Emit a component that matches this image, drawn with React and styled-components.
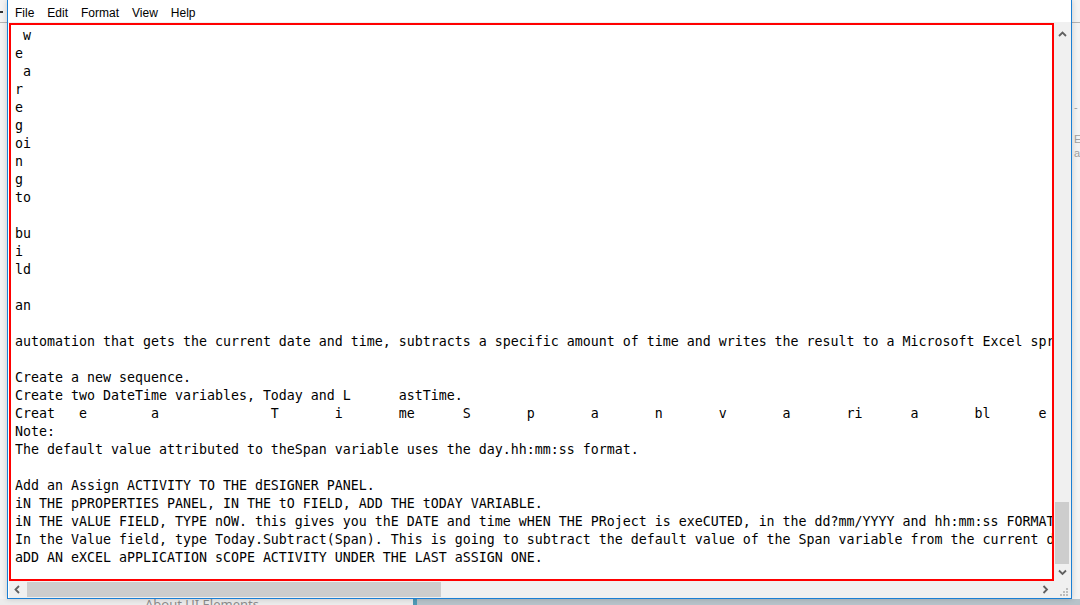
import React from 'react';
import styled, { createGlobalStyle } from 'styled-components';

const GlobalStyle = createGlobalStyle`
  html, body {
    margin: 0;
    padding: 0;
    background: #f0f0f0;
    overflow: hidden;
  }
  #root {
    width: 1080px;
    height: 605px;
  }
`;

// puts each word at a given column, padding with spaces like the stray tabs in the file
const atCols = (pairs) =>
  pairs.reduce((line, [col, word]) => line + ' '.repeat(Math.max(0, col - line.length)) + word, '');

const lines = [
  ' w',
  'e',
  ' a',
  'r',
  'e',
  'g',
  'oi',
  'n',
  'g',
  'to',
  '',
  'bu',
  'i',
  'ld',
  '',
  'an',
  '',
  'automation that gets the current date and time, subtracts a specific amount of time and writes the result to a Microsoft Excel spreadsheet.',
  '',
  'Create a new sequence.',
  'Create two DateTime variables, Today and L      astTime.',
  atCols([
    [0, 'Creat'], [8, 'e'], [17, 'a'], [32, 'T'], [40, 'i'], [48, 'me'], [56, 'S'], [64, 'p'],
    [72, 'a'], [80, 'n'], [88, 'v'], [96, 'a'], [104, 'ri'], [112, 'a'], [120, 'bl'], [128, 'e'],
  ]),
  'Note:',
  'The default value attributed to theSpan variable uses the day.hh:mm:ss format.',
  '',
  'Add an Assign ACTIVITY TO THE dESIGNER PANEL.',
  'iN THE pPROPERTIES PANEL, IN THE tO FIELD, ADD THE tODAY VARIABLE.',
  'iN THE vALUE FIELD, TYPE nOW. this gives you thE DATE and time wHEN THE PRoject is exeCUTED, in the dd?mm/YYYY and hh:mm:ss FORMAT.',
  'In the Value field, type Today.Subtract(Span). This is going to subtract the default value of the Span variable from the current date.',
  'aDD AN eXCEL aPPLICATION sCOPE ACTIVITY UNDER THE LAST aSSIGN ONE.',
];

const menus = ['File', 'Edit', 'Format', 'View', 'Help'];

function Chevron({ dir }) {
  const paths = {
    up: 'M1 5 L4.5 1.5 L8 5',
    down: 'M1 1.5 L4.5 5 L8 1.5',
    left: 'M5 1 L1.5 4.5 L5 8',
    right: 'M1.5 1 L5 4.5 L1.5 8',
  };
  const vertical = dir === 'up' || dir === 'down';
  return (
    <svg width={vertical ? 9 : 7} height={vertical ? 7 : 9} viewBox={vertical ? '0 0 9 7' : '0 0 7 9'}>
      <path d={paths[dir]} fill="none" stroke="#606060" strokeWidth="1.8" />
    </svg>
  );
}

function Grip() {
  const dots = [[6, 0], [3, 3], [6, 3], [0, 6], [3, 6], [6, 6]];
  return (
    <svg width="8" height="8" viewBox="0 0 8 8">
      {dots.map(([x, y]) => (
        <rect key={`${x}-${y}`} x={x} y={y} width="2" height="2" fill="#bcbcbc" />
      ))}
    </svg>
  );
}

export default function App() {
  return (
    <Desktop>
      <GlobalStyle />
      <Top>
        <LeftStrip>
          <Dash />
          <StripLine />
        </LeftStrip>
        <Window>
          <MenuBar>
            {menus.map((m) => (
              <MenuItem key={m}>{m}</MenuItem>
            ))}
          </MenuBar>
          <Editor>
            <TextPane>
              <TextBody>{lines.join('\n')}</TextBody>
            </TextPane>
            <VScroll>
              <ArrowButton $top>
                <Chevron dir="up" />
              </ArrowButton>
              <VTrack>
                <VThumb />
              </VTrack>
              <ArrowButton>
                <Chevron dir="down" />
              </ArrowButton>
            </VScroll>
            <HScroll>
              <ArrowButton>
                <Chevron dir="left" />
              </ArrowButton>
              <HThumb />
              <HTrack />
              <ArrowButton>
                <Chevron dir="right" />
              </ArrowButton>
            </HScroll>
            <Corner>
              <Grip />
            </Corner>
          </Editor>
        </Window>
        <RightStrip>
          <StripLine />
          <Ghost $mt={78}>-</Ghost>
          <Ghost $mt={20}>E</Ghost>
          <Ghost $mt={2}>a</Ghost>
        </RightStrip>
      </Top>
      <BottomStrip>
        <LowerPanel>
          <LowerLabel>About UI Elements</LowerLabel>
        </LowerPanel>
        <Splitter />
        <LowerRest />
      </BottomStrip>
    </Desktop>
  );
}

const Desktop = styled.div`
  width: 1080px;
  height: 605px;
  display: flex;
  flex-direction: column;
  overflow: hidden;
  background: #f0f0f0;
`;

const Top = styled.div`
  display: flex;
  height: 599px;
  flex: none;
`;

const LeftStrip = styled.div`
  width: 7px;
  flex: none;
  background: #f3f3f3;
  display: flex;
  flex-direction: column;
  overflow: hidden;
`;

const Dash = styled.div`
  width: 3px;
  height: 2px;
  margin-top: 11px;
  background: #333;
`;

const StripLine = styled.div`
  height: 1px;
  margin-top: 9px;
  background: #b4b4b4;
  flex: none;
`;

const RightStrip = styled(LeftStrip)`
  width: 8px;
  padding-top: 13px;
  box-sizing: border-box;
`;

const Ghost = styled.div`
  margin-top: ${(p) => p.$mt}px;
  padding-left: 2px;
  height: 12px;
  overflow: hidden;
  font: 11px/12px 'Liberation Sans', sans-serif;
  color: #a0a0a0;
`;

const Window = styled.div`
  width: 1065px;
  flex: none;
  box-sizing: border-box;
  border: 1px solid #1a7fd4;
  border-top: none;
  background: #ffffff;
  display: flex;
  flex-direction: column;
  box-shadow: 0 0 6px rgba(0, 0, 0, 0.18);
  position: relative;
  z-index: 1;
`;

const MenuBar = styled.div`
  height: 23px;
  box-sizing: border-box;
  padding-top: 4px;
  border-bottom: 1px solid #f0f0f0;
  display: flex;
  flex: none;
  background: #ffffff;
`;

const MenuItem = styled.span`
  padding: 0 6.5px;
  font: 12px/18px 'Liberation Sans', 'Noto Sans', sans-serif;
  color: #000;

  &:first-child {
    padding-left: 7px;
  }
`;

const Editor = styled.div`
  flex: 1;
  display: grid;
  grid-template-columns: 1fr 17px;
  grid-template-rows: 1fr 17px;
  min-height: 0;
`;

const TextPane = styled.div`
  margin-left: 1px;
  border: 2px solid #ff0000;
  padding: 2px 0 0 4px;
  overflow: hidden;
  background: #ffffff;
`;

const TextBody = styled.pre`
  margin: 0;
  overflow: hidden;
  font-family: 'DejaVu Sans Mono', 'Liberation Mono', monospace;
  font-size: 13.29px;
  line-height: 18px;
  color: #000;
  white-space: pre;
`;

const VScroll = styled.div`
  background: #f0f0f0;
  display: flex;
  flex-direction: column;
`;

const ArrowButton = styled.div`
  width: 17px;
  height: 17px;
  flex: none;
  display: flex;
  align-items: center;
  justify-content: center;
  margin-top: ${(p) => (p.$top ? '3px' : '0')};
`;

const VTrack = styled.div`
  flex: 1;
  display: flex;
  flex-direction: column;
  justify-content: flex-end;
`;

const VThumb = styled.div`
  height: 62px;
  margin: 0 2px 0 1px;
  background: #cdcdcd;
`;

const HScroll = styled.div`
  margin-left: 1px;
  background: #f0f0f0;
  display: flex;
  align-items: stretch;
`;

const HThumb = styled.div`
  width: 414px;
  margin: 1px 0 1px 1px;
  background: #cdcdcd;
`;

const HTrack = styled.div`
  flex: 1;
`;

const Corner = styled.div`
  background: #f0f0f0;
  display: flex;
  align-items: flex-end;
  justify-content: flex-end;
  padding: 0 3px 2px 0;
`;

const BottomStrip = styled.div`
  flex: 1;
  display: flex;
  overflow: hidden;
`;

const LowerPanel = styled.div`
  width: 413px;
  flex: none;
  background: #ececec;
  padding-left: 145px;
  box-sizing: border-box;
  overflow: hidden;
`;

const LowerLabel = styled.div`
  margin-top: -3px;
  font: 13px/16px 'Noto Sans', sans-serif;
  color: #8c8c8c;
`;

const Splitter = styled.div`
  width: 4px;
  flex: none;
  background: #4f9bb7;
`;

const LowerRest = styled.div`
  flex: 1;
  background: #b7c3ca;
`;
